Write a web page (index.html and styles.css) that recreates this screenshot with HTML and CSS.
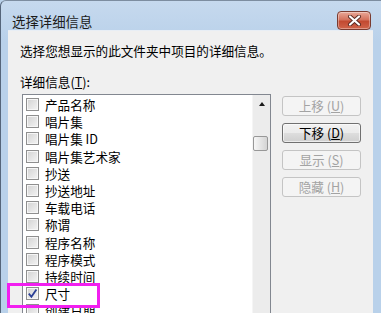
FILE: index.html
```html
<!DOCTYPE html>
<html lang="zh-CN">
<head>
    <meta charset="UTF-8">
    <title>选择详细信息</title>
    <link rel="stylesheet" href="styles.css">
</head>
<body>
    <div class="window">
        <div class="titlebar">
            <span class="title">选择详细信息</span>
            <button class="close-btn" title="关闭">
                <svg width="15" height="11" viewBox="0 0 15 11">
                    <path d="M3 1.5 L12 9.5 M12 1.5 L3 9.5" stroke="#5a2a22" stroke-width="4" stroke-linecap="round"/>
                    <path d="M3 1.5 L12 9.5 M12 1.5 L3 9.5" stroke="#ffffff" stroke-width="2.2" stroke-linecap="round"/>
                </svg>
            </button>
        </div>

        <div class="client">
            <p class="intro">选择您想显示的此文件夹中项目的详细信息。</p>
            <p class="label">详细信息(<u>T</u>):</p>

            <div class="main">
                <div class="listbox">
                    <ul class="items" id="items"></ul>
                    <div class="scrollbar">
                        <div class="arrow-up"></div>
                        <div class="thumb"></div>
                    </div>
                </div>

                <div class="buttons">
                    <button class="btn" disabled>上移 (<u>U</u>)</button>
                    <button class="btn">下移 (<u>D</u>)</button>
                    <button class="btn" disabled>显示 (<u>S</u>)</button>
                    <button class="btn" disabled>隐藏 (<u>H</u>)</button>
                </div>
            </div>
        </div>

        <div class="highlight"></div>
    </div>

    <script>
        const details = [
            { name: '产品名称', checked: false },
            { name: '唱片集', checked: false },
            { name: '唱片集 ID', checked: false },
            { name: '唱片集艺术家', checked: false },
            { name: '抄送', checked: false },
            { name: '抄送地址', checked: false },
            { name: '车载电话', checked: false },
            { name: '称谓', checked: false },
            { name: '程序名称', checked: false },
            { name: '程序模式', checked: false },
            { name: '持续时间', checked: false },
            { name: '尺寸', checked: true },
            { name: '创建日期', checked: false }
        ];

        const checkMark = '<svg width="11" height="11" viewBox="0 0 11 11"><path d="M1.8 5.6 L4.4 8.8 L9.4 1.4" fill="none" stroke="#2b3f95" stroke-width="1.8"/></svg>';

        document.getElementById('items').innerHTML = details.map(item => `
            <li class="item">
                <span class="check">${item.checked ? checkMark : ''}</span>
                <span class="item-name">${item.name}</span>
            </li>
        `).join('');
    </script>
</body>
</html>
```

FILE: styles.css
```css
body {
    margin: 0;
    width: 381px;
    height: 313px;
    overflow: hidden;
    background: #b9d1ea;
    font-family: "Noto Sans CJK SC", "Liberation Sans", sans-serif;
    font-size: 12.6px;
    color: #000;
}

.window {
    position: relative;
    height: 313px;
    box-sizing: border-box;
    display: flex;
    flex-direction: column;
    background: linear-gradient(#c6d9ee, #b9d1ea 40px);
    border-left: 1px solid #55657a;
    border-top: 1px solid #7d8da0;
    border-top-left-radius: 6px;
}

.titlebar {
    height: 31px;
    display: flex;
    justify-content: space-between;
    align-items: flex-start;
    padding: 0 10px 0 11px;
}

.title {
    margin-top: 11px;
    font-size: 13.4px;
    line-height: 18px;
    color: #1b1b1b;
}

.close-btn {
    margin-top: 10px;
    width: 34px;
    height: 19px;
    padding: 0;
    display: flex;
    align-items: center;
    justify-content: center;
    border: 1px solid #7a3b30;
    border-radius: 4px;
    background: linear-gradient(#e9a898, #d4725d 45%, #c24a31 55%, #d0644a);
    box-shadow: inset 0 0 0 1px rgba(255, 255, 255, 0.35);
}

.client {
    flex: 1;
    margin: 0 8px 0 7px;
    padding: 11px 0 0 12px;
    background: #f0f0f0;
    border-top: 1px solid #e8eef5;
}

.intro {
    margin: 0;
    line-height: 17px;
}

.label {
    margin: 14px 0 0;
    line-height: 17px;
}

.main {
    display: flex;
    margin-top: 4px;
}

.listbox {
    display: flex;
    width: 249px;
    height: 240px;
    margin-left: 2px;
    box-sizing: border-box;
    border: 1px solid #828790;
    background: #fff;
}

.items {
    flex: 1;
    list-style: none;
    margin: 0;
    padding: 1px 0 0 3px;
}

.item {
    display: flex;
    align-items: center;
    height: 17.2px;
}

.check {
    width: 13px;
    height: 13px;
    box-sizing: border-box;
    display: flex;
    align-items: center;
    justify-content: center;
    border: 1px solid #8f8f8f;
    background: linear-gradient(135deg, #d2d2d2, #f4f4f4);
    box-shadow: inset 0 0 0 1px #f6f6f6;
}

.check svg {
    flex: none;
}

.item-name {
    margin-left: 6px;
    line-height: 17px;
}

.scrollbar {
    width: 17px;
    background: #ececec;
    border-left: 1px solid #f5f5f5;
}

.arrow-up {
    height: 17px;
    display: flex;
    align-items: center;
    justify-content: center;
}

.arrow-up::before {
    content: "";
    border-left: 3.5px solid transparent;
    border-right: 3.5px solid transparent;
    border-bottom: 4px solid #1a1a1a;
}

.thumb {
    width: 15px;
    height: 15px;
    margin-top: 24px;
    box-sizing: border-box;
    border: 1px solid #979797;
    border-radius: 2px;
    background: linear-gradient(to right, #f6f6f6, #e2e2e2 60%, #d4d4d4);
}

.buttons {
    display: flex;
    flex-direction: column;
    gap: 7px;
    margin: 2px 0 0 11px;
}

.btn {
    width: 79px;
    height: 20px;
    padding: 0;
    font-family: inherit;
    font-size: 12.6px;
    line-height: 18px;
    color: #000;
    border: 1px solid #707070;
    border-radius: 3px;
    background: linear-gradient(#f2f2f2, #ebebeb 48%, #dddddd 52%, #cfcfcf);
    box-shadow: inset 0 0 0 1px rgba(255, 255, 255, 0.6);
}

.btn:disabled {
    color: #a3a3a3;
    border-color: #c4c4c4;
    background: #f4f4f4;
    box-shadow: none;
}

.highlight {
    position: absolute;
    left: 6px;
    top: 282px;
    width: 87px;
    height: 19px;
    border: 3px solid #f21ff0;
}
```
